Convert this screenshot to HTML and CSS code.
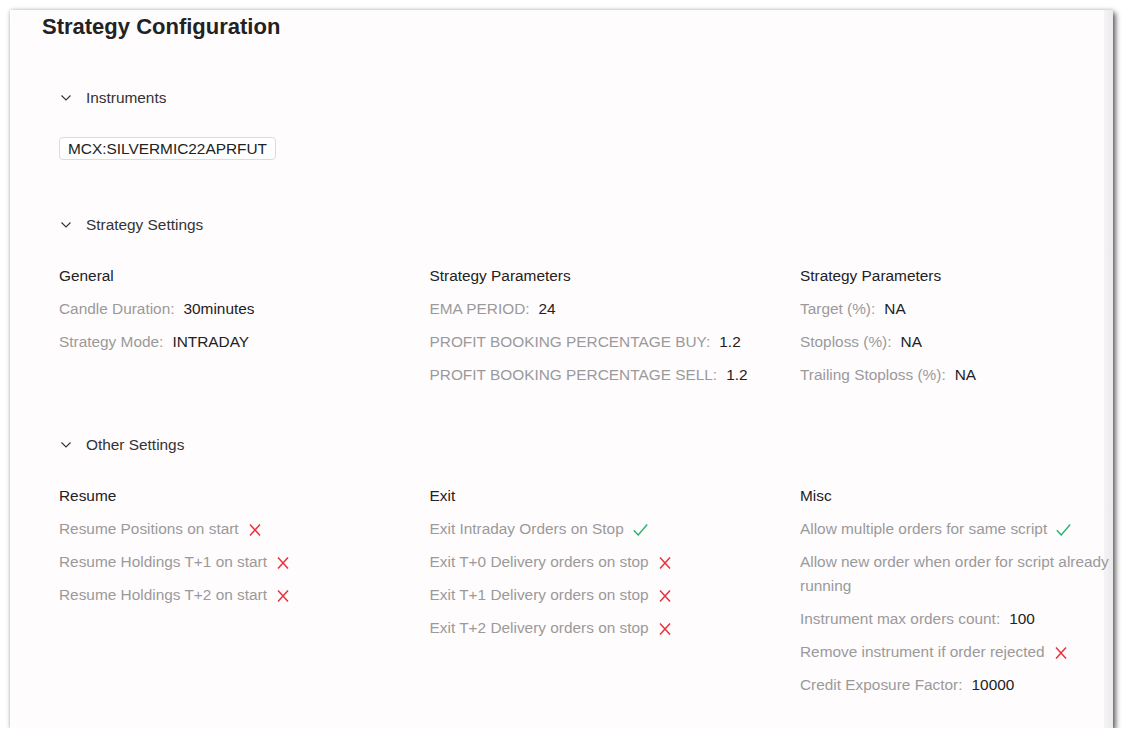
FILE: index.html
```html
<!DOCTYPE html>
<html>
<head>
<meta charset="utf-8">
<link rel="stylesheet" href="styles.css">
</head>
<body>
<div class="card">
  <div class="main">
    <h1 class="title">Strategy Configuration</h1>

    <section class="section sec-instruments">
      <div class="sec-head">
        <svg class="chev" width="10" height="6" viewBox="0 0 10 6"><path d="M0.5 0.5 L5 5 L9.5 0.5" fill="none" stroke="#333" stroke-width="1.1"/></svg>
        <span>Instruments</span>
      </div>
      <div class="tags"><span class="tag">MCX:SILVERMIC22APRFUT</span></div>
    </section>

    <section class="section sec-strategy">
      <div class="sec-head">
        <svg class="chev" width="10" height="6" viewBox="0 0 10 6"><path d="M0.5 0.5 L5 5 L9.5 0.5" fill="none" stroke="#333" stroke-width="1.1"/></svg>
        <span>Strategy Settings</span>
      </div>
      <div class="cols">
        <div class="col">
          <div class="col-title">General</div>
          <div class="row"><span class="lbl">Candle Duration:</span><span class="val">30minutes</span></div>
          <div class="row"><span class="lbl">Strategy Mode:</span><span class="val">INTRADAY</span></div>
        </div>
        <div class="col">
          <div class="col-title">Strategy Parameters</div>
          <div class="row"><span class="lbl">EMA PERIOD:</span><span class="val">24</span></div>
          <div class="row"><span class="lbl">PROFIT BOOKING PERCENTAGE BUY:</span><span class="val">1.2</span></div>
          <div class="row"><span class="lbl">PROFIT BOOKING PERCENTAGE SELL:</span><span class="val">1.2</span></div>
        </div>
        <div class="col">
          <div class="col-title">Strategy Parameters</div>
          <div class="row"><span class="lbl">Target (%):</span><span class="val">NA</span></div>
          <div class="row"><span class="lbl">Stoploss (%):</span><span class="val">NA</span></div>
          <div class="row"><span class="lbl">Trailing Stoploss (%):</span><span class="val">NA</span></div>
        </div>
      </div>
    </section>

    <section class="section sec-other">
      <div class="sec-head">
        <svg class="chev" width="10" height="6" viewBox="0 0 10 6"><path d="M0.5 0.5 L5 5 L9.5 0.5" fill="none" stroke="#333" stroke-width="1.1"/></svg>
        <span>Other Settings</span>
      </div>
      <div class="cols">
        <div class="col">
          <div class="col-title">Resume</div>
          <div class="row"><span class="lbl">Resume Positions on start</span><svg class="ic-x" width="12" height="12" viewBox="0 0 12 12"><path d="M1 0.5 L11 11.5 M11 0.5 L1 11.5" stroke="#e8323c" stroke-width="1.5" fill="none"/></svg></div>
          <div class="row"><span class="lbl">Resume Holdings T+1 on start</span><svg class="ic-x" width="12" height="12" viewBox="0 0 12 12"><path d="M1 0.5 L11 11.5 M11 0.5 L1 11.5" stroke="#e8323c" stroke-width="1.5" fill="none"/></svg></div>
          <div class="row"><span class="lbl">Resume Holdings T+2 on start</span><svg class="ic-x" width="12" height="12" viewBox="0 0 12 12"><path d="M1 0.5 L11 11.5 M11 0.5 L1 11.5" stroke="#e8323c" stroke-width="1.5" fill="none"/></svg></div>
        </div>
        <div class="col">
          <div class="col-title">Exit</div>
          <div class="row"><span class="lbl">Exit Intraday Orders on Stop</span><svg class="ic-check" width="15" height="12" viewBox="0 0 15 12"><path d="M0.8 6.2 L5.2 11 L14.2 0.6" stroke="#2bb673" stroke-width="1.5" fill="none"/></svg></div>
          <div class="row"><span class="lbl">Exit T+0 Delivery orders on stop</span><svg class="ic-x" width="12" height="12" viewBox="0 0 12 12"><path d="M1 0.5 L11 11.5 M11 0.5 L1 11.5" stroke="#e8323c" stroke-width="1.5" fill="none"/></svg></div>
          <div class="row"><span class="lbl">Exit T+1 Delivery orders on stop</span><svg class="ic-x" width="12" height="12" viewBox="0 0 12 12"><path d="M1 0.5 L11 11.5 M11 0.5 L1 11.5" stroke="#e8323c" stroke-width="1.5" fill="none"/></svg></div>
          <div class="row"><span class="lbl">Exit T+2 Delivery orders on stop</span><svg class="ic-x" width="12" height="12" viewBox="0 0 12 12"><path d="M1 0.5 L11 11.5 M11 0.5 L1 11.5" stroke="#e8323c" stroke-width="1.5" fill="none"/></svg></div>
        </div>
        <div class="col">
          <div class="col-title">Misc</div>
          <div class="row"><span class="lbl">Allow multiple orders for same script</span><svg class="ic-check" width="15" height="12" viewBox="0 0 15 12"><path d="M0.8 6.2 L5.2 11 L14.2 0.6" stroke="#2bb673" stroke-width="1.5" fill="none"/></svg></div>
          <div class="row"><span class="lbl">Allow new order when order for script already running</span></div>
          <div class="row"><span class="lbl">Instrument max orders count:</span><span class="val">100</span></div>
          <div class="row"><span class="lbl">Remove instrument if order rejected</span><svg class="ic-x" width="12" height="12" viewBox="0 0 12 12"><path d="M1 0.5 L11 11.5 M11 0.5 L1 11.5" stroke="#e8323c" stroke-width="1.5" fill="none"/></svg></div>
          <div class="row"><span class="lbl">Credit Exposure Factor:</span><span class="val">10000</span></div>
        </div>
      </div>
    </section>
  </div>
  <div class="track"></div>
</div>
</body>
</html>
```

FILE: styles.css
```css
html, body {
  margin: 0;
  padding: 0;
  background: #ffffff;
}
body {
  font-family: "Liberation Sans", Arial, sans-serif;
  color: #222;
  padding: 10px 0 0 10px;
}
.card {
  width: 1103px;
  height: 718px;
  background: #fffcfe;
  display: flex;
  box-shadow: 3px 3px 5px rgba(0,0,0,0.55), 0 0 4px rgba(0,0,0,0.25);
  overflow: hidden;
}
.main {
  flex: 1;
  padding: 5px 0 0 32px;
  min-width: 0;
  position: relative;
  z-index: 1;
}
.track {
  width: 9px;
  background: linear-gradient(to right, #f5f3f5, #ebe9eb);
}
.title {
  margin: 0;
  font-size: 22px;
  line-height: 24px;
  font-weight: bold;
  color: #222;
}
.section {
  padding-left: 17px;
}
.sec-instruments { margin-top: 47px; }
.sec-strategy { margin-top: 53px; }
.sec-other { margin-top: 46px; }
.sec-head {
  display: flex;
  align-items: center;
  font-size: 15.4px;
  line-height: 24px;
  color: #333;
}
.chev {
  margin-left: 2px;
  margin-right: 15px;
}
.tags {
  margin-top: 27px;
  display: flex;
}
.tag {
  border: 1px solid #dcdcdc;
  border-radius: 4px;
  padding: 0 8px;
  font-size: 15.4px;
  line-height: 21px;
  color: #222;
  background: #fff;
}
.cols {
  margin-top: 27px;
  display: grid;
  grid-template-columns: 370.5px 370.5px 312px;
}
.col {
  display: flex;
  flex-direction: column;
  gap: 9px;
}
.col-title {
  font-size: 15.4px;
  line-height: 24px;
  color: #222;
}
.row {
  font-size: 15.4px;
  line-height: 24px;
  display: flex;
  align-items: baseline;
}
.lbl {
  color: #9a9a9a;
}
.val {
  color: #222;
  margin-left: 9px;
}
.ic-x, .ic-check {
  margin-left: 10px;
  flex: none;
  align-self: center;
  position: relative;
  top: 1px;
}
.ic-check {
  margin-left: 9px;
}
```
